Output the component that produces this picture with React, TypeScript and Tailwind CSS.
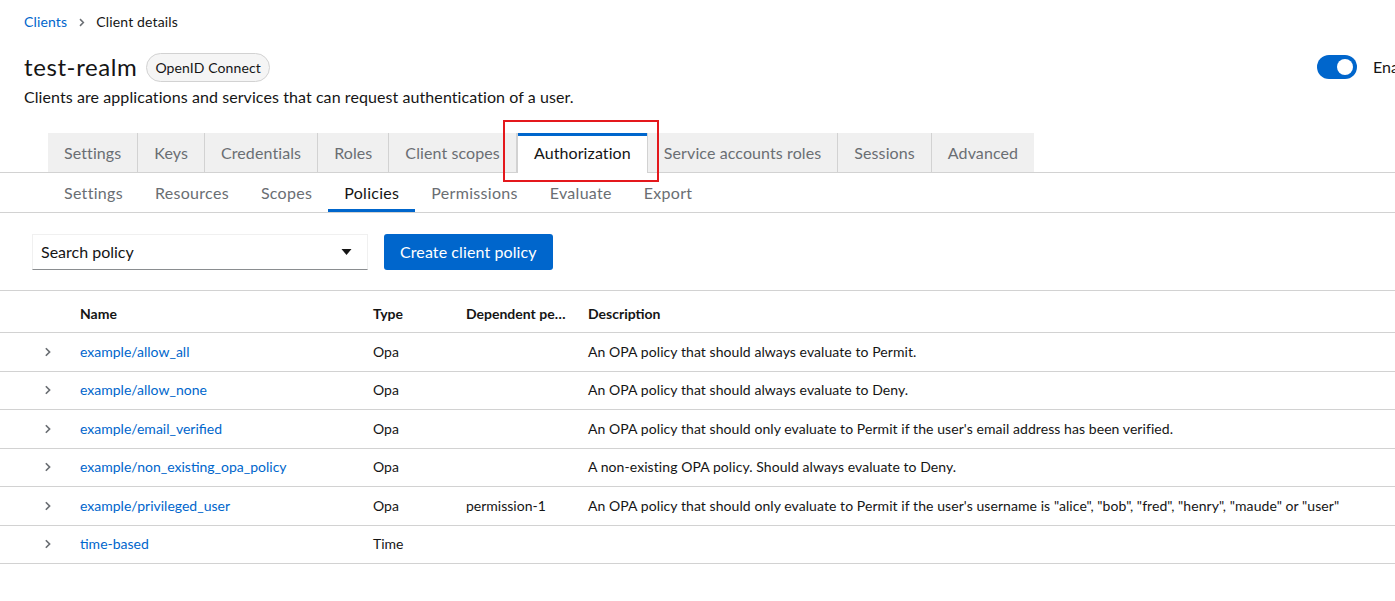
import React from 'react';

const topTabs = [
  'Settings',
  'Keys',
  'Credentials',
  'Roles',
  'Client scopes',
  'Authorization',
  'Service accounts roles',
  'Sessions',
  'Advanced',
];

const subTabs = ['Settings', 'Resources', 'Scopes', 'Policies', 'Permissions', 'Evaluate', 'Export'];

const policies = [
  { name: 'example/allow_all', type: 'Opa', dep: '', desc: 'An OPA policy that should always evaluate to Permit.' },
  { name: 'example/allow_none', type: 'Opa', dep: '', desc: 'An OPA policy that should always evaluate to Deny.' },
  {
    name: 'example/email_verified',
    type: 'Opa',
    dep: '',
    desc: "An OPA policy that should only evaluate to Permit if the user's email address has been verified.",
  },
  {
    name: 'example/non_existing_opa_policy',
    type: 'Opa',
    dep: '',
    desc: 'A non-existing OPA policy. Should always evaluate to Deny.',
  },
  {
    name: 'example/privileged_user',
    type: 'Opa',
    dep: 'permission-1',
    desc: 'An OPA policy that should only evaluate to Permit if the user\'s username is "alice", "bob", "fred", "henry", "maude" or "user"',
  },
  { name: 'time-based', type: 'Time', dep: '', desc: '' },
];

function Chevron({ className }: { className?: string }) {
  return (
    <svg viewBox="0 0 8 12" className={className} fill="none">
      <path d="M2 1.5 L6.5 6 L2 10.5" stroke="currentColor" strokeWidth="2" />
    </svg>
  );
}

export default function App() {
  return (
    <div className="relative min-h-screen overflow-hidden bg-white font-['Lato',sans-serif] text-[#151515]">
      {/* breadcrumb */}
      <nav className="flex items-center px-6 pt-[12px] text-sm tracking-[0.15px]">
        <span className="text-[#0066cc]">Clients</span>
        <Chevron className="mx-[11px] h-[9px] w-[7px] text-[#6a6e73]" />
        <span>Client details</span>
      </nav>

      {/* header */}
      <div className="mt-[20px] flex pl-6">
        <div className="flex-1">
          <div className="flex items-center gap-[9px]">
            <h1 className="text-2xl leading-[30px] tracking-[0.6px]">test-realm</h1>
            <span className="rounded-full border border-[#d2d2d2] bg-[#f5f5f5] px-[8px] py-[4px] text-sm leading-[19px] tracking-[0.1px]">
              OpenID Connect
            </span>
          </div>
          <p className="mt-[3px] text-base tracking-[0.08px]">
            Clients are applications and services that can request authentication of a user.
          </p>
        </div>
        <div className="flex w-[78px] shrink-0 items-start gap-4 pt-[3px]">
          <div className="flex h-6 w-10 shrink-0 items-center justify-end rounded-full bg-[#0066cc] px-1">
            <div className="h-4 w-4 rounded-full bg-white" />
          </div>
          <span className="whitespace-nowrap text-base leading-6">Enabled</span>
        </div>
      </div>

      {/* top tabs */}
      <div className="mt-[24px] flex border-b border-[#d2d2d2] pl-12 tracking-[0.1px]">
        {topTabs.map((t) =>
          t === 'Authorization' ? (
            <div
              key={t}
              className="relative -mb-px flex h-10 items-center border-x border-[#d2d2d2] bg-white px-4 text-base text-[#151515]"
            >
              <div className="absolute left-0 right-0 top-0 h-[3px] bg-[#0066cc]" />
              {t}
              <div className="pointer-events-none absolute -left-[15px] -right-[12px] -top-[13px] -bottom-[9px] border-2 border-[#e4181c]" />
            </div>
          ) : (
            <div
              key={t}
              className="flex h-[39px] items-center border-r border-[#d2d2d2] bg-[#f0f0f0] px-4 text-base text-[#6a6e73] last:border-r-0"
            >
              {t}
            </div>
          ),
        )}
      </div>

      {/* sub tabs */}
      <div className="flex border-b border-[#d2d2d2] pl-12 tracking-[0.3px]">
        {subTabs.map((t) => (
          <div
            key={t}
            className={
              t === 'Policies'
                ? 'relative flex h-[39px] items-center px-4 text-base text-[#151515]'
                : 'flex h-[39px] items-center px-4 text-base text-[#6a6e73]'
            }
          >
            {t}
            {t === 'Policies' && <div className="absolute bottom-0 left-0 right-0 h-[3px] bg-[#0066cc]" />}
          </div>
        ))}
      </div>

      {/* toolbar */}
      <div className="flex items-center gap-4 px-8 pb-5 pt-[21px]">
        <div className="flex h-9 w-[336px] items-center justify-between border border-[#f0f0f0] border-b-[#8a8d90] px-2">
          <span className="text-base">Search policy</span>
          <svg viewBox="0 0 10 6" className="mr-[7px] h-[6px] w-[11px]">
            <path d="M0 0 H10 L5 6 Z" fill="#151515" />
          </svg>
        </div>
        <button className="h-9 rounded-[3px] bg-[#0066cc] px-4 text-base tracking-[0.1px] text-white">
          Create client policy
        </button>
      </div>

      {/* table */}
      <div className="border-t border-[#d2d2d2] text-sm">
        <div className="grid h-[42px] grid-cols-[80px_293px_93px_122px_1fr] items-center border-b border-[#d2d2d2] pt-[5px] font-bold">
          <div />
          <div>Name</div>
          <div>Type</div>
          <div className="overflow-hidden pr-[18px]">
            <div className="truncate">Dependent permissions</div>
          </div>
          <div>Description</div>
        </div>
        {policies.map((p) => (
          <div
            key={p.name}
            className="grid h-[38.5px] grid-cols-[80px_293px_93px_122px_1fr] items-center border-b border-[#d2d2d2]"
          >
            <div className="flex justify-start pl-[44px]">
              <Chevron className="h-[10px] w-[7px] text-[#6a6e73]" />
            </div>
            <div className="text-[#0066cc]">{p.name}</div>
            <div>{p.type}</div>
            <div>{p.dep}</div>
            <div className="whitespace-nowrap tracking-[0.07px]">{p.desc}</div>
          </div>
        ))}
      </div>
    </div>
  );
}
